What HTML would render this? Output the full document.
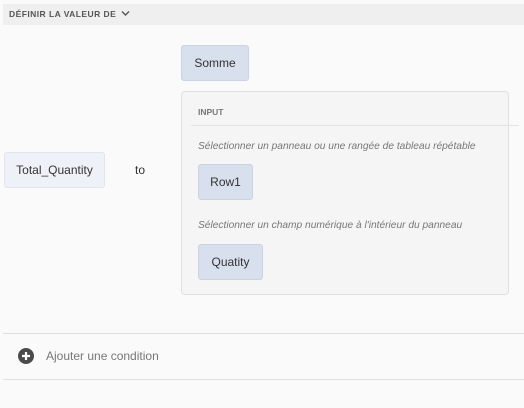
<!DOCTYPE html><html><head><style>
body{margin:0;width:524px;height:408px;background:#fafafa;font-family:"Liberation Sans",sans-serif;position:relative;overflow:hidden;color:#333}
.a{position:absolute}
.btn{position:absolute;background:#d8e0ee;border:1px solid #c9d3e3;border-radius:3px;box-sizing:border-box;font-size:12px;color:#333;display:flex;align-items:center;justify-content:center}
.it{position:absolute;font-size:10.2px;font-style:italic;color:#777}
</style></head><body>
<div class="a" style="left:3px;top:4px;width:521px;height:21px;background:#efefef"></div>
<div class="a" style="left:9px;top:9px;font-size:8.5px;font-weight:bold;letter-spacing:0.45px;color:#555">DÉFINIR LA VALEUR DE</div>
<svg class="a" style="left:121px;top:10px" width="9" height="7"><path d="M1 1.5L4.5 5L8 1.5" stroke="#555" stroke-width="1.4" fill="none"/></svg>
<div class="btn" style="left:4px;top:152px;width:101px;height:36px;background:#eef2f8;border-color:#dfe5ee">Total_Quantity</div>
<div class="a" style="left:135px;top:163px;font-size:12px">to</div>
<div class="btn" style="left:181px;top:45px;width:68px;height:36px">Somme</div>
<div class="a" style="left:181px;top:91px;width:328px;height:204px;background:#f5f5f5;border:1px solid #e0e0e0;border-radius:4px;box-sizing:border-box"></div>
<div class="a" style="left:198px;top:107px;font-size:8.5px;font-weight:bold;color:#777">INPUT</div>
<div class="a" style="left:191px;top:125px;width:328px;height:1px;background:#e4e4e4"></div>
<div class="it" style="left:198px;top:141px">Sélectionner un panneau ou une rangée de tableau répétable</div>
<div class="btn" style="left:198px;top:164px;width:55px;height:36px">Row1</div>
<div class="it" style="left:198px;top:220px">Sélectionner un champ numérique à l'intérieur du panneau</div>
<div class="btn" style="left:198px;top:244px;width:65px;height:36px">Quatity</div>
<div class="a" style="left:3px;top:333px;width:521px;height:1px;background:#e0e0e0"></div>
<div class="a" style="left:3px;top:379px;width:521px;height:1px;background:#e0e0e0"></div>
<svg class="a" style="left:18px;top:348px" width="16" height="16"><circle cx="8" cy="8" r="8" fill="#4b4b4b"/><path d="M8 4V12M4 8H12" stroke="#fff" stroke-width="2.2"/></svg>
<div class="a" style="left:46px;top:349px;font-size:12px;color:#777">Ajouter une condition</div>
</body></html>
